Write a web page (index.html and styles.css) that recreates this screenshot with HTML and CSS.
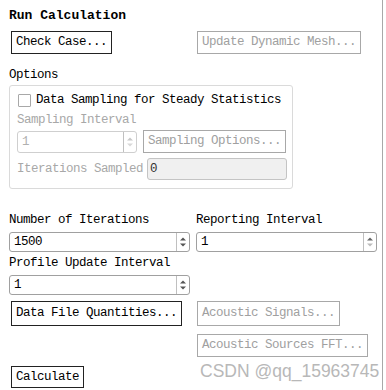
FILE: index.html
```html
<!DOCTYPE html>
<html lang="en">
  <head>
    <meta charset="UTF-8" />
    <meta name="viewport" content="width=device-width, initial-scale=1.0" />
    <title>Run Calculation</title>
    <link rel="stylesheet" href="styles.css">
  </head>
  <body>
    <div class="panel">
      <div class="title">Run Calculation</div>

      <div class="btn-grid top-row">
        <button class="btn">Check Case...</button>
        <button class="btn disabled">Update Dynamic Mesh...</button>
      </div>

      <div class="label options-label">Options</div>
      <div class="group">
        <div class="check-row">
          <span class="checkbox"></span>
          <span>Data Sampling for Steady Statistics</span>
        </div>
        <div class="label muted sampling-label">Sampling Interval</div>
        <div class="sampling-row">
          <div class="spinner spinner-disabled">
            <span class="value">1</span>
            <span class="arrows">
              <svg width="12" height="18" viewBox="0 0 12 18"><path d="M3 7.5 L6 4.5 L9 7.5 Z" fill="#c8c8c8"/><path d="M3 10.5 L6 13.5 L9 10.5 Z" fill="#d8d8d8"/></svg>
            </span>
          </div>
          <button class="btn disabled">Sampling Options...</button>
        </div>
        <div class="sampled-row">
          <span class="muted">Iterations Sampled</span>
          <div class="readonly">0</div>
        </div>
      </div>

      <div class="field-grid">
        <div class="label">Number of Iterations</div>
        <div class="label">Reporting Interval</div>
        <div class="spinner">
          <span class="value">1500</span>
          <span class="arrows">
            <svg width="12" height="18" viewBox="0 0 12 18"><path d="M3 7.5 L6 4.5 L9 7.5 Z" fill="#555"/><path d="M3 10.5 L6 13.5 L9 10.5 Z" fill="#555"/></svg>
          </span>
        </div>
        <div class="spinner">
          <span class="value">1</span>
          <span class="arrows">
            <svg width="12" height="18" viewBox="0 0 12 18"><path d="M3 7.5 L6 4.5 L9 7.5 Z" fill="#666"/><path d="M3 10.5 L6 13.5 L9 10.5 Z" fill="#bbb"/></svg>
          </span>
        </div>
        <div class="label profile-label">Profile Update Interval</div>
        <div></div>
        <div class="spinner">
          <span class="value">1</span>
          <span class="arrows">
            <svg width="12" height="18" viewBox="0 0 12 18"><path d="M3 7.5 L6 4.5 L9 7.5 Z" fill="#555"/><path d="M3 10.5 L6 13.5 L9 10.5 Z" fill="#555"/></svg>
          </span>
        </div>
      </div>

      <div class="btn-grid bottom-btns">
        <button class="btn tall">Data File Quantities...</button>
        <button class="btn disabled tall">Acoustic Signals...</button>
        <div></div>
        <button class="btn disabled fft">Acoustic Sources FFT...</button>
        <button class="btn calc">Calculate</button>
      </div>

      <div class="watermark">CSDN @qq_15963745</div>
    </div>
  </body>
</html>
```

FILE: styles.css
```css
body {
  margin: 0;
  padding: 0;
  background-color: #fff;
}
.panel {
  position: relative;
  width: 383px;
  height: 390px;
  box-sizing: border-box;
  padding: 8px 0 0 9px;
  border-right: 1px solid #a8a8a8;
  font-family: "Liberation Mono", "DejaVu Sans Mono", monospace;
  font-size: 12.5px;
  letter-spacing: -0.5px;
  color: #000;
}
.title {
  font-weight: bold;
  font-size: 13px;
  letter-spacing: 0;
  line-height: 16px;
  height: 16px;
}
.label {
  line-height: 14px;
  height: 14px;
  white-space: nowrap;
}
.muted {
  color: #a8a8a8;
}
.btn-grid {
  display: grid;
  grid-template-columns: 186px auto;
  padding-left: 2px;
  justify-items: start;
}
.btn {
  font-family: inherit;
  font-size: inherit;
  letter-spacing: inherit;
  color: #000;
  background-color: #fff;
  border: 1px solid #222;
  border-radius: 0;
  height: 23px;
  padding: 0 4px;
  margin: 0;
  line-height: 21px;
  white-space: nowrap;
}
.btn.disabled {
  color: #a0a0a0;
  border-color: #a8a8a8;
}
.top-row {
  margin-top: 7px;
}
.options-label {
  margin-top: 14px;
}
.group {
  margin-top: 3px;
  width: 284px;
  height: 104px;
  box-sizing: border-box;
  border: 1px solid #dadada;
  border-radius: 3px;
  padding: 7px 0 0 7px;
}
.check-row {
  display: flex;
  align-items: center;
  gap: 5px;
  height: 14px;
  line-height: 14px;
  padding-left: 1px;
}
.checkbox {
  width: 11px;
  height: 11px;
  border: 1px solid #a8a8a8;
  border-radius: 1px;
  background-color: #fff;
}
.sampling-label {
  margin-top: 6px;
}
.sampling-row {
  margin-top: 3px;
  display: flex;
  gap: 6px;
  align-items: center;
}
.sampling-row .btn {
  height: 23px;
}
.spinner {
  display: flex;
  align-items: stretch;
  box-sizing: border-box;
  height: 20px;
  border: 1px solid #a0a0a0;
  border-radius: 3px;
  background-color: #fff;
}
.spinner .value {
  flex: 1;
  line-height: 18px;
  padding-left: 4px;
}
.spinner .arrows {
  width: 12px;
  border-left: 1px solid #c0c0c0;
  display: flex;
  align-items: center;
}
.spinner-disabled {
  width: 120px;
  height: 22px;
  border-color: #cfcfcf;
}
.spinner-disabled .value {
  color: #b0b0b0;
  line-height: 20px;
}
.sampled-row {
  margin-top: 5px;
  display: flex;
  align-items: center;
  gap: 4px;
  line-height: 14px;
}
.readonly {
  width: 140px;
  height: 22px;
  box-sizing: border-box;
  border: 1px solid #c4c4c4;
  border-radius: 3px;
  background-color: #f0f0f0;
  padding-left: 2px;
  line-height: 20px;
  color: #333;
}
.field-grid {
  margin-top: 24px;
  display: grid;
  grid-template-columns: 181px 181px;
  column-gap: 6px;
  row-gap: 5px;
}
.profile-label {
  margin-top: -1px;
}
.bottom-btns {
  margin-top: 6px;
  row-gap: 8px;
}
.btn.tall {
  height: 25px;
}
.btn.calc {
  margin-top: 1px;
  height: 22px;
}
.watermark {
  position: absolute;
  left: 200px;
  top: 361px;
  font-family: "Liberation Sans", Arial, sans-serif;
  font-size: 17.5px;
  letter-spacing: 0;
  color: #b8b8b8;
}
```
